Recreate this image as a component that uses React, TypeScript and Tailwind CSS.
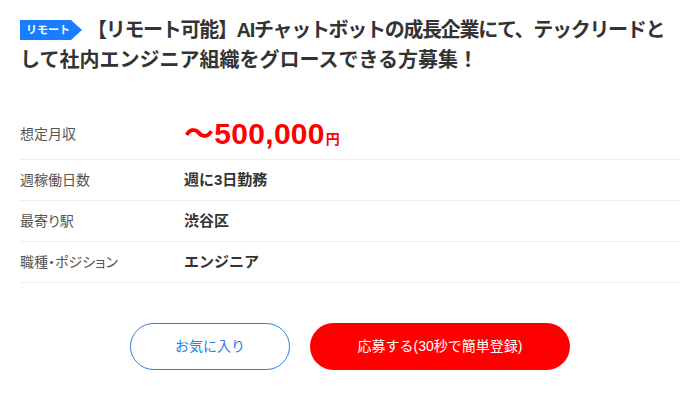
import React from 'react';

const rows = [
  { label: '週稼働日数', value: '週に3日勤務' },
  { label: '最寄り駅', value: '渋谷区' },
  { label: '職種・ポジション', value: 'エンジニア' },
];

const App = () => {
  return (
    <div
      className="w-[695px] h-[406px] bg-white px-5 pt-[15px] text-[#333]"
      style={{ fontFamily: '"Liberation Sans", "Noto Sans CJK JP", sans-serif' }}
    >
      {/* Title */}
      <h1 className="text-[20px] font-bold leading-[30px]">
        <span className="inline-flex items-center align-[3px] h-5 w-[62px] pl-[6px] mr-[5px] bg-[#1a7cff] text-white text-[11px] font-bold [clip-path:polygon(0_0,calc(100%-11px)_0,100%_50%,calc(100%-11px)_100%,0_100%)]">
          リモート
        </span>
        <span className="tracking-[-1.3px]">【リモート可能】AIチャットボットの成長企業にて、テックリードと</span>
        <br />
        して社内エンジニア組織をグロースできる方募集！
      </h1>

      {/* Detail table */}
      <div className="mt-[34px] w-[660px]">
        <div className="flex items-center h-[51px] pt-[1px] border-b border-[#eee]">
          <div className="w-[164px] text-[14px] text-[#555] [font-feature-settings:'palt']">想定月収</div>
          <div className="flex items-baseline text-[#ff0000] font-bold">
            <span className="text-[30px] leading-none tracking-[0.3px]">〜500,000</span>
            <span className="text-[14px] ml-[1px]">円</span>
          </div>
        </div>
        {rows.map((r) => (
          <div key={r.label} className="flex items-center h-[41px] border-b border-[#eee]">
            <div className="w-[164px] text-[14px] text-[#555] [font-feature-settings:'palt']">{r.label}</div>
            <div className="text-[15px] font-bold text-[#333]">{r.value}</div>
          </div>
        ))}
      </div>

      {/* Buttons */}
      <div className="flex justify-center gap-5 mt-10 w-[660px]">
        <button className="w-40 h-[47px] rounded-full border border-[#2d7fe8] text-[#2d7fe8] text-[14px]">
          お気に入り
        </button>
        <button className="w-[260px] h-[47px] rounded-full bg-[#ff0000] text-white text-[14px]">
          応募する(30秒で簡単登録)
        </button>
      </div>
    </div>
  );
};

export default App;
